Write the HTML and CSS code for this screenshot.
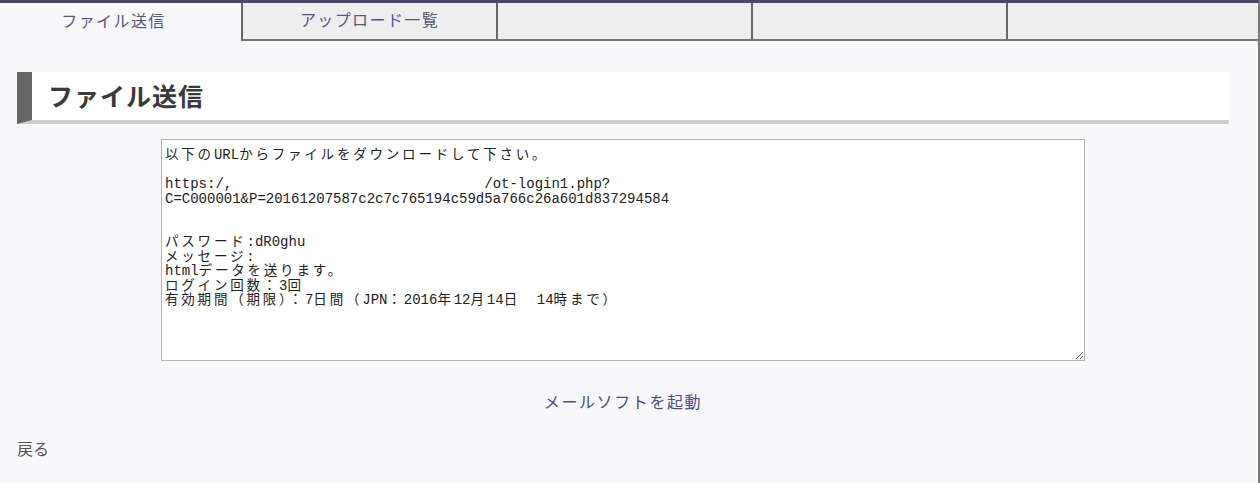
FILE: index.html
```html
<!DOCTYPE html>
<html lang="ja">

<head>
    <meta charset="UTF-8">
    <meta name="viewport" content="width=device-width, initial-scale=1.0">
    <title>ファイル送信</title>
    <link rel="stylesheet" href="styles.css">
</head>

<body>
    <div class="page">
        <ul class="tabs">
            <li class="tab active"><a href="#">ファイル送信</a></li>
            <li class="tab"><a href="#">アップロード一覧</a></li>
            <li class="tab"></li>
            <li class="tab"></li>
            <li class="tab last"></li>
        </ul>

        <div class="content">
            <h1 class="heading">ファイル送信</h1>

            <div class="mail-box">
                <div class="mail-body">
                    <div class="line"><span class="ja">以下の</span>URL<span class="ja">からファイルをダウンロードして下さい。</span></div>
                    <div class="line"></div>
                    <div class="line">https:/,                              /ot-login1.php?</div>
                    <div class="line">C=C000001&amp;P=20161207587c2c7c765194c59d5a766c26a601d837294584</div>
                    <div class="line"></div>
                    <div class="line"></div>
                    <div class="line"><span class="ja">パスワード</span>:dR0ghu</div>
                    <div class="line"><span class="ja">メッセージ</span>:</div>
                    <div class="line">html<span class="ja">データを送ります。</span></div>
                    <div class="line"><span class="ja">ログイン回数：</span>3<span class="ja">回</span></div>
                    <div class="line"><span class="ja">有効期間（期限）：</span>7<span class="ja">日間（</span>JPN<span class="ja">：</span>2016<span class="ja">年</span>12<span class="ja">月</span>14<span class="ja">日</span>  14<span class="ja">時まで）</span></div>
                </div>
            </div>

            <p class="mailer"><a href="#">メールソフトを起動</a></p>

            <p class="back"><a href="#">戻る</a></p>
        </div>
    </div>
</body>

</html>
```

FILE: styles.css
```css
    body * {
        box-sizing: border-box;
    }

    body {
        margin: 0;
        padding: 0;
        background: #f8f8fa;
        font-family: "Noto Sans CJK JP", "Liberation Sans", sans-serif;
        color: #555;
    }

    a {
        text-decoration: none;
    }

    .page {
        min-height: 100vh;
        border-top: 3px solid #4b4570;
        border-right: 2px solid #7a7a7a;
    }

    /* tab row */
    .tabs {
        display: flex;
        list-style: none;
        margin: 0;
        padding: 0;
        height: 38px;
    }

    .tab {
        width: 255px;
        background: #eeeeee;
        border-left: 2px solid #666;
        border-bottom: 2px solid #777;
        display: flex;
        justify-content: center;
        align-items: center;
        padding-bottom: 4px;
    }

    .tab a {
        color: #55557e;
        font-size: 16px;
        letter-spacing: 1.4px;
    }

    .tab.active {
        width: 241px;
        background: #f8f8fa;
        border-left: none;
        border-bottom: none;
        padding-bottom: 4px;
        padding-right: 14px;
    }

    .tab.last {
        flex: 1;
    }

    .content {
        padding: 31px 29px 0 17px;
    }

    /* page heading with left bar */
    .heading {
        margin: 0;
        height: 52px;
        display: flex;
        align-items: center;
        background: #fff;
        border-left: 15px solid #666;
        border-bottom: 4px solid #cfcfcf;
        padding: 0 0 2px 16px;
        font-size: 25px;
        font-weight: bold;
        color: #3a3a3a;
        letter-spacing: 1px;
    }

    .mail-box {
        display: flex;
        justify-content: center;
        margin-top: 15px;
    }

    /* looks like a textarea */
    .mail-body {
        width: 924px;
        height: 222px;
        margin: 0;
        padding: 8px 3px;
        border: 1px solid #b4b4b4;
        background: #fff;
        font-family: "Liberation Mono", "Noto Sans CJK JP", monospace;
        font-size: 14px;
        color: #222;
        resize: both;
        overflow: hidden;
    }

    .line {
        height: 14.5px;
        line-height: 14.5px;
        white-space: pre;
    }

    .line .ja {
        font-size: 13.5px;
        letter-spacing: 2.8px;
    }

    .mailer {
        margin: 28px 0 0;
        text-align: center;
        font-size: 16px;
        letter-spacing: 1.6px;
    }

    .mailer a {
        color: #4c4c82;
    }

    .back {
        margin: 23px 0 0;
        font-size: 16px;
    }

    .back a {
        color: #555;
    }
```
